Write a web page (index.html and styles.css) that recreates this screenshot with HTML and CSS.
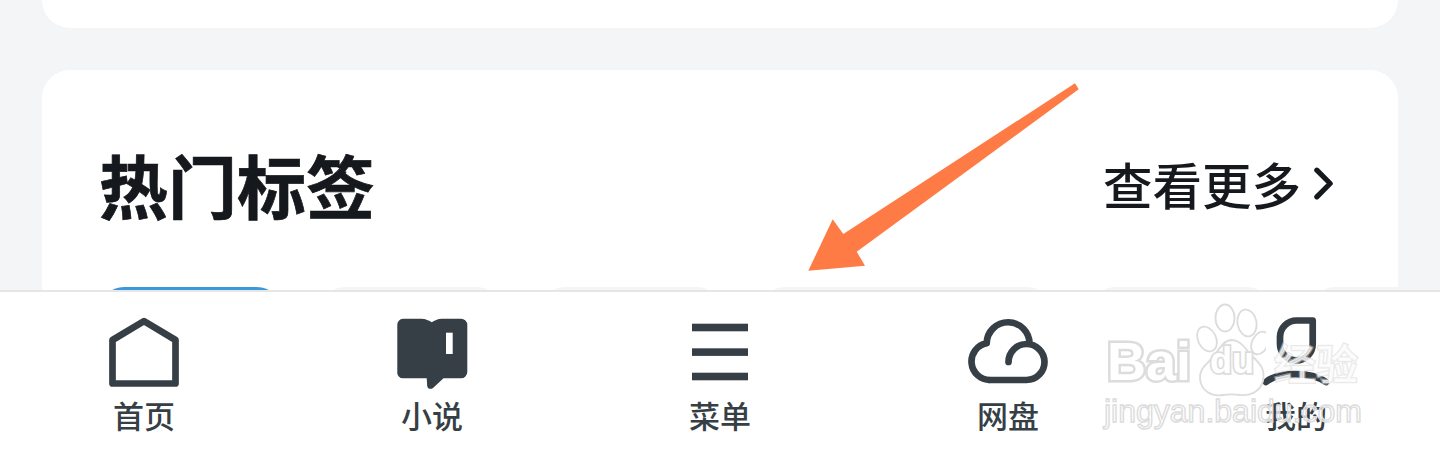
FILE: index.html
```html
<!DOCTYPE html>
<html lang="en">
<head>
  <meta charset="UTF-8" />
  <meta name="viewport" content="width=device-width, initial-scale=1.0"/>
  <title>热门标签</title>
  <link rel="stylesheet" href="styles.css">
</head>
<body>
  <div class="page">
    <div class="card card-prev"></div>

    <div class="card card-tags">
      <div class="card-head">
        <h2 class="card-title">热门标签</h2>
        <a class="more">
          <span>查看更多</span>
          <svg class="more-arrow" viewBox="0 0 20 34"><path d="M3 3 L17 17 L3 31" /></svg>
        </a>
      </div>
      <div class="tags">
        <div class="tag tag-active"></div>
        <div class="tag"></div>
        <div class="tag"></div>
        <div class="tag tag-wide"></div>
        <div class="tag"></div>
        <div class="tag"></div>
      </div>
    </div>
  </div>

  <!-- Bottom tabs -->
  <nav class="tabbar">
    <div class="tab">
      <svg class="icon" viewBox="0 0 72 72"><path class="line" d="M36 4.2 L67.5 23 V66.5 H4.5 V23 Z" /></svg>
      <span class="tab-label">首页</span>
    </div>
    <div class="tab">
      <svg class="icon" viewBox="0 0 72 72">
        <path class="solid" d="M7 1.7 H25 C30 1.7 33 3.5 35.8 5.3 C38.5 3.5 41.5 1.7 46 1.7 H65 A6.3 6.3 0 0 1 71.3 8 V55 A6.3 6.3 0 0 1 65 61.3 H47.5 L37 71 C35 72.6 31.5 72 31.2 69 L30.7 61.3 H7 A5.7 5.7 0 0 1 1.3 55 V8 A6 6 0 0 1 7 1.7 Z" />
        <rect class="blank" x="50" y="15.7" width="6.7" height="21.3" />
      </svg>
      <span class="tab-label">小说</span>
    </div>
    <div class="tab">
      <svg class="icon" viewBox="0 0 72 72">
        <rect class="solid" x="8" y="6.7" width="56" height="7.6" />
        <rect class="solid" x="8" y="31.3" width="56" height="7.6" />
        <rect class="solid" x="8" y="55.7" width="56" height="7.6" />
      </svg>
      <span class="tab-label">菜单</span>
    </div>
    <div class="tab">
      <svg class="icon icon-cloud" viewBox="0 0 84 72">
        <path class="line" d="M24 63 A18.5 18.5 0 0 1 20.7 26.3 A21.4 21.4 0 0 1 63.5 27" />
        <path class="line line-butt" d="M42.5 45 A18 18 0 1 1 60.5 63 H24" />
      </svg>
      <span class="tab-label">网盘</span>
    </div>
    <div class="tab">
      <svg class="icon" viewBox="0 0 72 72">
        <path class="line" d="M52.7 3.5 V27 A16.2 16.2 0 0 1 20 27 V20 A16.5 16.5 0 0 1 36.5 3.5 Z" />
        <path class="line line-butt" d="M6 65 C18 55 50 54 66 65" />
      </svg>
      <span class="tab-label">我的</span>
    </div>
  </nav>

  <!-- Arrow drawn on top of the screenshot -->
  <svg class="pointer" viewBox="0 0 1440 458">
    <polygon points="1075,83.3 1078.7,89.3 856.7,251.7 865,265.7 808.3,270.7 832.7,219.3 843.3,234" />
  </svg>

  <!-- Watermark -->
  <div class="watermark">
    <svg class="paw" viewBox="0 0 70 96">
      <ellipse cx="11" cy="36" rx="9" ry="13" transform="rotate(-25 11 36)" />
      <ellipse cx="29" cy="15" rx="9.5" ry="13.5" />
      <ellipse cx="51" cy="20" rx="9.5" ry="13.5" transform="rotate(-10 51 20)" />
      <ellipse cx="64" cy="40" rx="8" ry="12" transform="rotate(25 64 40)" />
      <path d="M36 37 C45 37 50 47 57 54 C66 62 69 68 67 78 C64 90 52 93 44 92 C38 91 33 91 27 92 C16 94 5 88 4 76 C3 66 10 62 17 54 C23 47 27 37 36 37 Z" />
    </svg>
    <div class="wm-row">
      <span class="wm-bai">Bai</span>
      <span class="wm-du">du</span>
      <span class="wm-cn">经验</span>
    </div>
    <div class="wm-url">jingyan.baidu.com</div>
  </div>
</body>
</html>
```

FILE: styles.css
```css
* {
  margin: 0;
  padding: 0;
  box-sizing: border-box;
  font-family: 'Noto Sans CJK SC', 'Noto Sans', sans-serif;
}
html, body {
  height: 100%;
}
body {
  background: #f4f5f7;
  position: relative;
  overflow: hidden;
}
.page {
  display: flex;
  flex-direction: column;
  gap: 42px;
  padding: 0 42px;
}
.card {
  background: #fff;
  border-radius: 28px;
  overflow: hidden;
}
.card-prev {
  height: 28px;
  border-radius: 0 0 28px 28px;
}
.card-tags {
  height: 400px;
  padding-top: 72px;
}
.card-head {
  display: flex;
  justify-content: space-between;
  align-items: center;
  height: 92px;
  padding: 0 65px 0 57px;
}
.card-title {
  padding-bottom: 7px;
  font-size: 69px;
  font-weight: 700;
  line-height: 85px;
  color: #15181c;
  -webkit-text-stroke: 0.7px #15181c;
}
.more {
  display: flex;
  align-items: center;
  gap: 13px;
  padding-bottom: 9px;
  font-size: 49.5px;
  font-weight: 500;
  color: #15181c;
}
.more-arrow {
  width: 19px;
  height: 33px;
  fill: none;
  stroke: #15181c;
  stroke-width: 5.5;
  stroke-linecap: round;
  stroke-linejoin: round;
}
.tags {
  display: flex;
  gap: 40px;
  margin-top: 53px;
  padding-left: 58px;
}
.tag {
  flex: none;
  width: 180px;
  height: 60px;
  border-radius: 24px;
  background: #f4f5f7;
}
.tag-active {
  width: 181px;
  background: #3a97d9;
}
.tag-wide {
  width: 290px;
}
.tabbar {
  position: absolute;
  left: 0;
  right: 0;
  top: 290px;
  bottom: 0;
  display: flex;
  padding-top: 25px;
  background: #fff;
  border-top: 2px solid #e6e6e6;
}
.tab {
  flex: 1;
  display: flex;
  flex-direction: column;
  align-items: center;
}
.icon {
  width: 72px;
  height: 72px;
}
.icon-cloud {
  width: 84px;
}
.line {
  fill: none;
  stroke: #373f46;
  stroke-width: 6.7;
  stroke-linejoin: round;
}
.line-butt {
  stroke-linecap: round;
}
.solid {
  fill: #373f46;
}
.blank {
  fill: #fff;
}
.tab-label {
  margin-top: 7px;
  font-size: 31px;
  font-weight: 500;
  line-height: 38px;
  color: #373f46;
}
.pointer {
  position: absolute;
  left: 0;
  top: 0;
  width: 1440px;
  height: 458px;
  fill: #ff7b45;
}
.watermark {
  position: absolute;
  left: 1104px;
  top: 303px;
  width: 262px;
  height: 130px;
}
.paw {
  position: absolute;
  left: 92px;
  top: 0;
  width: 70px;
  height: 96px;
  fill: rgba(255, 255, 255, 0.8);
  stroke: #dcdcdc;
  stroke-width: 1.8;
}
.wm-row {
  position: absolute;
  left: 0;
  right: 0;
  top: 27px;
  display: flex;
  align-items: center;
  height: 62px;
}
.wm-bai, .wm-du {
  font-family: 'Liberation Sans', sans-serif;
  color: #fff;
  paint-order: stroke fill;
  -webkit-text-stroke: 5px #dcdcdc;
}
.wm-bai {
  width: 106px;
  padding-left: 3px;
  font-size: 54px;
  font-weight: 700;
}
.wm-du {
  width: 62px;
  font-size: 36px;
  font-weight: 700;
  -webkit-text-stroke-width: 3.5px;
}
.wm-cn {
  padding-left: 2px;
  font-size: 42px;
  font-weight: 500;
  white-space: nowrap;
  color: rgba(255, 255, 255, 0.8);
  paint-order: stroke fill;
  -webkit-text-stroke: 2.5px rgba(215, 215, 215, 0.55);
}
.wm-url {
  position: absolute;
  left: 0;
  top: 88px;
  font-family: 'Liberation Sans', sans-serif;
  font-size: 32px;
  line-height: 40px;
  white-space: nowrap;
  color: rgba(255, 255, 255, 0.7);
  -webkit-text-stroke: 1.4px #dcdcdc;
}
```
